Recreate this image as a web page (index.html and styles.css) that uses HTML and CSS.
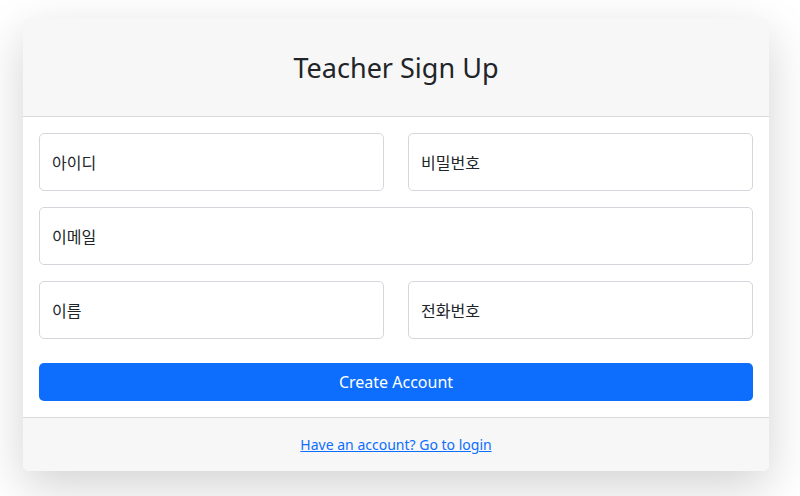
FILE: index.html
```html
<!DOCTYPE html>
<html lang="ko">
<head>
<meta charset="utf-8">
<title>Teacher Sign Up</title>
<link rel="stylesheet" href="styles.css">
</head>
<body>
<main class="page">
  <section class="card">
    <header class="card-header">
      <h2 class="title">Teacher Sign Up</h2>
    </header>
    <form class="card-body">
      <div class="row two">
        <label class="field"><input type="text" placeholder=" "><span>아이디</span></label>
        <label class="field"><input type="password" placeholder=" "><span>비밀번호</span></label>
      </div>
      <div class="row">
        <label class="field"><input type="email" placeholder=" "><span>이메일</span></label>
      </div>
      <div class="row two">
        <label class="field"><input type="text" placeholder=" "><span>이름</span></label>
        <label class="field"><input type="tel" placeholder=" "><span>전화번호</span></label>
      </div>
      <button type="button" class="btn">Create Account</button>
    </form>
    <footer class="card-footer">
      <a href="#" class="login-link">Have an account? Go to login</a>
    </footer>
  </section>
</main>
</body>
</html>
```

FILE: styles.css
```css
* { box-sizing: border-box; }
html, body { margin: 0; padding: 0; }
body {
  background: #ffffff;
  font-family: "Noto Sans", "Noto Sans CJK KR", sans-serif;
  color: #212529;
  width: 800px;
  height: 496px;
  overflow: hidden;
}
.page {
  padding: 18px 31px 0 23px;
}
.card {
  width: 746px;
  background: #fff;
  border-radius: 6px;
  box-shadow: 0 16px 48px rgba(0, 0, 0, 0.175);
  overflow: hidden;
}
.card-header {
  background: #f7f7f7;
  border-bottom: 1px solid #d9d9d9;
  height: 99px;
  display: flex;
  align-items: center;
  justify-content: center;
}
.title {
  margin: 0;
  font-weight: 400;
  font-size: 27px;
  line-height: 1.2;
  padding-top: 2px;
}
.card-body {
  padding: 16px 16px 16px;
  display: flex;
  flex-direction: column;
  gap: 16px;
  margin: 0;
}
.row { display: grid; grid-template-columns: 1fr; gap: 24px; }
.row.two { grid-template-columns: 1fr 1fr; }
.field {
  position: relative;
  display: block;
  height: 58px;
}
.field input {
  width: 100%;
  height: 58px;
  border: 1px solid #d3d6da;
  border-radius: 5px;
  background: #fff;
  padding: 16px 12px;
  font: inherit;
  outline: none;
}
.field span {
  position: absolute;
  left: 13px;
  top: 0;
  height: 57px;
  display: flex;
  align-items: center;
  font-size: 16px;
  color: #212529;
  pointer-events: none;
  font-family: "Noto Sans CJK KR", sans-serif;
}
.btn {
  margin-top: 8px;
  height: 38px;
  border: 0;
  border-radius: 5px;
  background: #0d6efd;
  color: #fff;
  font: inherit;
  font-size: 16px;
}
.card-footer {
  background: #f7f7f7;
  border-top: 1px solid #d9d9d9;
  height: 54px;
  display: flex;
  align-items: center;
  justify-content: center;
}
.login-link {
  color: #0d6efd;
  font-size: 14px;
  text-decoration: underline;
  padding-top: 0;
}
```
